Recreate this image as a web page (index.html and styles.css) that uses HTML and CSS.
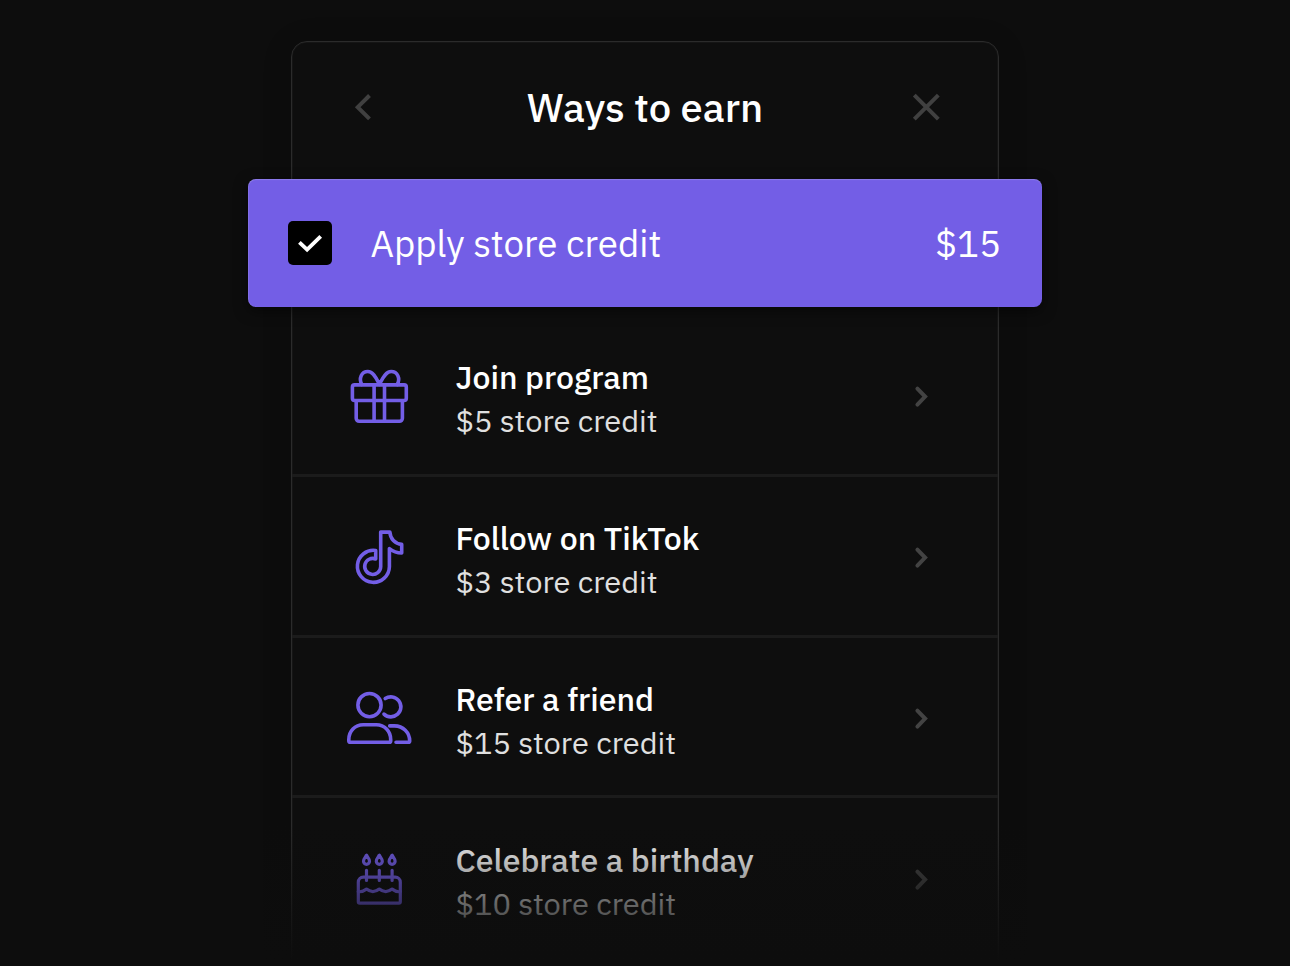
FILE: index.html
```html
<!DOCTYPE html>
<html lang="en">
<head>
<meta charset="utf-8">
<title>Ways to earn</title>
<link rel="stylesheet" href="styles.css">
</head>
<body>

<div class="panel">
	<div class="panel-header">
		<svg class="panel-back" width="20" height="30" viewBox="0 0 20 30"><path d="M16.5 2.500 4.700 14.200l11.800 11.700"/></svg>
		<h1 class="panel-title">Ways to earn</h1>
		<svg class="panel-close" width="30" height="30" viewBox="0 0 30 30"><path d="M3.300 2.200l24 24M27.300 2.200l-24 24"/></svg>
	</div>

	<div class="credit">
		<span class="credit-check">
			<svg width="44" height="44" viewBox="0 0 44 44"><path d="M11.4 21.4l7.700 7.300 13.600-13.300"/></svg>
		</span>
		<span class="credit-label">Apply store credit</span>
		<span class="credit-amount">$15</span>
	</div>

	<ul class="list">
		<li class="item">
			<svg class="item-icon" width="66" height="66" viewBox="0 0 66 66">
				<rect x="6.400" y="20.900" width="53.900" height="15.600" rx="2.200"/>
				<path d="M10.200 37v17.300a3 3 0 0 0 3 3h40.200a3 3 0 0 0 3-3V37M28.100 21v36M38.500 21v36"/>
				<path d="M15.800 20.500C12.500 14.500 15.500 7.500 21.800 7.500c5.800 0 8.700 7.500 11.600 12.800C36.300 15 39.500 7.500 45.200 7.500c6.300 0 9.500 7 6 13"/>
			</svg>
			<div class="item-text">
				<div class="item-name">Join program</div>
				<div class="item-reward">$5 store credit</div>
			</div>
			<svg class="item-arrow" width="18" height="24" viewBox="0 0 18 24"><path d="M4.400 3.600l7.700 8-7.700 8"/></svg>
		</li>
		<li class="item">
			<svg class="item-icon" width="66" height="66" viewBox="0 0 66 66">
				<path d="M34.700 7.100h9.200c.4 6.600 5 11.800 11.800 12.300V28c-4.500 0-8.800-1.500-12.300-4.300v18A16 16 0 1 1 29.700 25.500v8.500A8 8 0 1 0 34.700 41.700z"/>
			</svg>
			<div class="item-text">
				<div class="item-name">Follow on TikTok</div>
				<div class="item-reward">$3 store credit</div>
			</div>
			<svg class="item-arrow" width="18" height="24" viewBox="0 0 18 24"><path d="M4.400 3.600l7.700 8-7.700 8"/></svg>
		</li>
		<li class="item">
			<svg class="item-icon" width="66" height="66" viewBox="0 0 66 66">
				<circle cx="23.500" cy="19.100" r="11.600"/>
				<path d="M39.200 12.600A10 10 0 1 1 38 28.100"/>
				<path d="M2.800 55v-1.500C2.800 45 9 38.700 17.200 38.700h13.200C38.500 38.700 44.700 45 44.700 53.500V55c0 .8-.5 1.300-1.300 1.300H4.100c-.8 0-1.300-.5-1.300-1.300z"/>
				<path d="M43.700 39.900h4.800c8.500 0 15.200 6.500 15.200 15.100 0 .8-.5 1.300-1.300 1.300H50"/>
			</svg>
			<div class="item-text">
				<div class="item-name">Refer a friend</div>
				<div class="item-reward">$15 store credit</div>
			</div>
			<svg class="item-arrow" width="18" height="24" viewBox="0 0 18 24"><path d="M4.400 3.600l7.700 8-7.700 8"/></svg>
		</li>
		<li class="item">
			<svg class="item-icon cake" width="66" height="66" viewBox="0 0 66 66">
				<path d="M12.300 54.700V35.200a5 5 0 0 1 5-5h32a5 5 0 0 1 5 5v19.500c0 .8-.6 1.400-1.400 1.400H13.700c-.8 0-1.400-.6-1.400-1.400z"/>
				<path d="M20.500 23.300V33.500M33.300 23.300V33.500M46.100 23.300V33.500"/>
				<path d="M12.300 44.600c3.200.6 5-.2 8.200-2.500 4.500 3.600 8.300 3.600 12.800 0 4.500 3.600 8.300 3.600 12.800 0 3.200 2.300 5 3.100 8.200 2.500"/>
				<path d="M20.500 8.200c-1.500 2.200-3 4-3 6.100a3 3 0 0 0 6 0c0-2.100-1.500-3.900-3-6.100zM33.300 8.200c-1.500 2.200-3 4-3 6.100a3 3 0 0 0 6 0c0-2.100-1.500-3.900-3-6.100zM46.100 8.200c-1.500 2.200-3 4-3 6.100a3 3 0 0 0 6 0c0-2.100-1.500-3.900-3-6.100z"/>
			</svg>
			<div class="item-text">
				<div class="item-name">Celebrate a birthday</div>
				<div class="item-reward">$10 store credit</div>
			</div>
			<svg class="item-arrow" width="18" height="24" viewBox="0 0 18 24"><path d="M4.400 3.600l7.700 8-7.700 8"/></svg>
		</li>
	</ul>
</div>
<div class="fade"></div>

</body>
</html>
```

FILE: styles.css
```css
* {
	box-sizing: border-box;
}

html, body {
	height: 100%;
}

body {
	margin: 0;
	padding-top: 41px;
	overflow: hidden;
	position: relative;
	background: #0d0d0d;
	color: #fff;
	font-family: "IBM Plex Sans", "Noto Sans", sans-serif;
}

svg {
	display: block;
	fill: none;
	flex: none;
}

.panel {
	width: 708px;
	height: 960px;
	margin: 0 auto;
	border: 1px solid #2b2b2b;
	border-radius: 16px;
	background: #0e0e0e;
	box-shadow: inset 0 0 0 1px rgba(255, 255, 255, .03), 0 4px 30px rgba(0, 0, 0, .15);
}

.panel-header {
	height: 137px;
	padding: 0 57px 6px 61px;
	display: flex;
	align-items: center;
}
.panel-back, .panel-close {
	stroke: #404040;
	stroke-width: 4;
}
.panel-title {
	flex: 1;
	margin: 0;
	padding: 0 4px 2px 10px;
	font-size: 40px;
	font-weight: 500;
	line-height: 50px;
	text-align: center;
}

.credit {
	position: relative;
	height: 128px;
	margin: 0 -44px;
	padding: 0 41px 0 40px;
	display: flex;
	align-items: center;
	border-radius: 8px;
	background: #735ee6;
	box-shadow: inset 0 1px 1px rgba(255, 255, 255, .18), inset 1px 0 1px rgba(255, 255, 255, .1), 0 4px 14px rgba(0, 0, 0, .5);
	font-size: 36.7px;
	font-weight: 400;
}
.credit-check {
	width: 44px;
	height: 44px;
	border-radius: 5px;
	background: #000;
}
.credit-check svg {
	stroke: #fff;
	stroke-width: 3.8;
}
.credit-label {
	flex: 1;
	padding-left: 38.5px;
}

.list {
	margin: 9px 0 0;
	padding: 0;
	list-style: none;
}
.item {
	height: 160.8px;
	padding: 5px 67px 0 54px;
	display: flex;
	align-items: center;
	border-bottom: 3px solid #1b1b1b;
}
.item:last-child {
	border-color: transparent;
}
.item-icon {
	stroke: #735ee6;
	stroke-width: 3.6;
	stroke-linecap: round;
	stroke-linejoin: round;
}
.cake {
	stroke-width: 3.2;
}
.item-text {
	flex: 1;
	padding: 4px 0 0 43.5px;
}
.item-name {
	font-size: 32px;
	font-weight: 500;
	line-height: 43px;
}
.item-reward {
	color: #e0e0e0;
	font-size: 30.8px;
	font-weight: 400;
	line-height: 43px;
}
.item-arrow {
	stroke: #434343;
	stroke-width: 4;
	stroke-linecap: round;
}

/* panel dissolves into the page at the bottom */
.fade {
	position: absolute;
	left: 0;
	right: 0;
	bottom: 0;
	height: 141px;
	background: linear-gradient(rgba(13, 13, 13, 0), #0d0d0d 97%);
}
```
